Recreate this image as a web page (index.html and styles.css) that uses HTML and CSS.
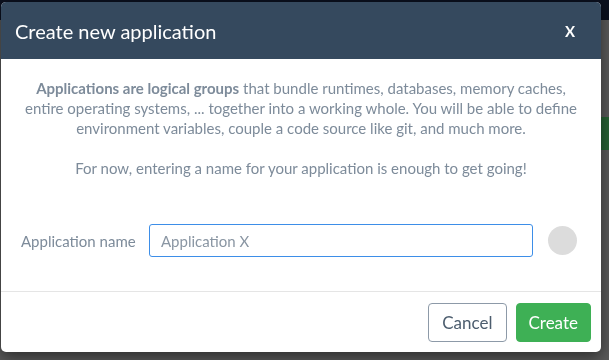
FILE: index.html
```html
<!DOCTYPE html>
<html lang="en">
<head>
    <meta charset="UTF-8">
    <meta name="viewport" content="width=device-width, initial-scale=1.0">
    <title>Create new application</title>
    <link rel="stylesheet" href="styles.css">
</head>
<body>
    <!-- Page behind the modal -->
    <div class="page">
        <div class="topbar"><span class="brand">my account</span></div>
        <div class="green-strip"></div>
    </div>

    <div class="backdrop"></div>

    <div class="modal">
        <div class="modal-header">
            <h1 class="modal-title">Create new application</h1>
            <button class="close-btn" type="button">X</button>
        </div>
        <div class="modal-body">
            <p class="intro">
                <strong>Applications are logical groups</strong> that bundle runtimes, databases, memory caches,
                entire operating systems, ... together into a working whole. You will be able to define
                environment variables, couple a code source like git, and much more.
            </p>
            <p class="intro">For now, entering a name for your application is enough to get going!</p>

            <div class="form-row">
                <label class="form-label" for="app-name">Application name</label>
                <input class="form-input" id="app-name" type="text" placeholder="Application X">
                <span class="status-dot"></span>
            </div>
        </div>
        <div class="modal-footer">
            <button class="btn btn-cancel" type="button">Cancel</button>
            <button class="btn btn-create" type="button">Create</button>
        </div>
    </div>
</body>
</html>
```

FILE: styles.css
```css
body {
    margin: 0;
    font-family: Lato, "Open Sans", sans-serif;
    background-color: #b4b4b4;
    min-height: 100vh;
    overflow: hidden;
}

.page {
    display: flex;
    flex-direction: column;
    min-height: 100vh;
}

.topbar {
    height: 20px;
    background-color: #16203c;
    text-align: center;
}

.brand {
    color: #888;
    font-size: 16px;
    font-weight: bold;
    line-height: 20px;
}

.green-strip {
    margin-top: 97px;
    margin-left: auto;
    width: 100px;
    height: 33px;
    background-color: #4fc468;
}

.backdrop {
    position: fixed;
    inset: 0;
    background-color: rgba(0, 0, 0, 0.5);
}

.modal {
    position: absolute;
    top: 2px;
    left: 1px;
    width: 600px;
    height: 350px;
    background-color: #fff;
    border-radius: 5px;
    box-shadow: 0 5px 15px rgba(0, 0, 0, 0.5);
    display: flex;
    flex-direction: column;
    overflow: hidden;
}

.modal-header {
    height: 57px;
    flex-shrink: 0;
    background-color: #35495e;
    display: flex;
    align-items: center;
    justify-content: space-between;
    padding: 0 14px 0 14px;
}

.modal-title {
    margin: 0;
    color: #fff;
    font-size: 20px;
    font-weight: normal;
}

.close-btn {
    background: none;
    border: none;
    color: #fff;
    font-family: inherit;
    font-size: 15px;
    font-weight: bold;
    padding: 0 12px 0 0;
    cursor: pointer;
}

.modal-body {
    flex: 1;
    padding: 19px 20px 0 20px;
}

.intro {
    margin: 0 0 20px 0;
    color: #7d8b9a;
    font-size: 15px;
    line-height: 20px;
    text-align: center;
}

.intro strong {
    font-weight: bold;
}

.form-row {
    display: flex;
    align-items: center;
    margin-top: 46px;
}

.form-label {
    width: 128px;
    color: #7d8b9a;
    font-size: 15px;
}

.form-input {
    width: 384px;
    height: 33px;
    box-sizing: border-box;
    padding: 0 11px;
    border: 1px solid #3d8ee8;
    border-radius: 3px;
    font-family: inherit;
    font-size: 15px;
    color: #333;
    outline: none;
}

.form-input::placeholder {
    color: #8a96a3;
}

.status-dot {
    width: 29px;
    height: 29px;
    margin-left: 15px;
    border-radius: 50%;
    background-color: #dcdcdc;
}

.modal-footer {
    flex-shrink: 0;
    border-top: 1px solid #e5e5e5;
    height: 60px;
    display: flex;
    align-items: center;
    justify-content: flex-end;
    gap: 9px;
    padding: 0 10px;
}

.btn {
    height: 39px;
    padding: 0 13px;
    border-radius: 4px;
    font-family: inherit;
    font-size: 17px;
    cursor: pointer;
}

.btn-cancel {
    background-color: #fff;
    border: 1px solid #8d9aa8;
    color: #4c5d6e;
}

.btn-create {
    padding: 0 12px;
    background-color: #3eb055;
    border: 1px solid #3eb055;
    color: #fff;
}
```
